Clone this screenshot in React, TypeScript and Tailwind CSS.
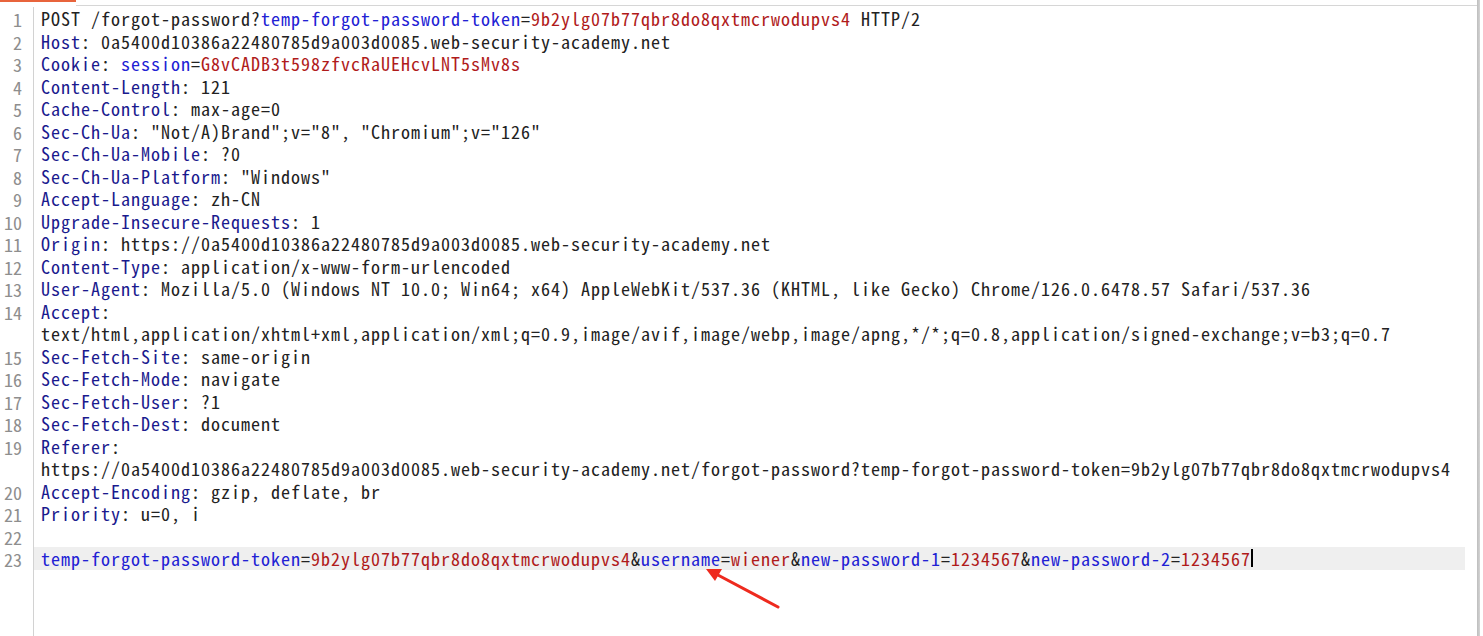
import React from "react";

type Kind = "t" | "k" | "p" | "v";
type Seg = [string, Kind];

const HOST = "0a5400d10386a22480785d9a003d0085.web-security-academy.net";
const TOKEN = "9b2ylg07b77qbr8do8qxtmcrwodupvs4";

const hdr = (name: string, value: string): Seg[][] => [[[name, "k"], [": " + value, "t"]]];

// each entry = one numbered line, holding one or more visual rows
const lines: Seg[][][] = [
  [[["POST /forgot-password?", "t"], ["temp-forgot-password-token", "p"], ["=", "t"], [TOKEN, "v"], [" HTTP/2", "t"]]],
  hdr("Host", HOST),
  [[["Cookie", "k"], [": ", "t"], ["session", "p"], ["=", "t"], ["G8vCADB3t598zfvcRaUEHcvLNT5sMv8s", "v"]]],
  hdr("Content-Length", "121"),
  hdr("Cache-Control", "max-age=0"),
  hdr("Sec-Ch-Ua", '"Not/A)Brand";v="8", "Chromium";v="126"'),
  hdr("Sec-Ch-Ua-Mobile", "?0"),
  hdr("Sec-Ch-Ua-Platform", '"Windows"'),
  hdr("Accept-Language", "zh-CN"),
  hdr("Upgrade-Insecure-Requests", "1"),
  hdr("Origin", "https://" + HOST),
  hdr("Content-Type", "application/x-www-form-urlencoded"),
  hdr(
    "User-Agent",
    "Mozilla/5.0 (Windows NT 10.0; Win64; x64) AppleWebKit/537.36 (KHTML, like Gecko) Chrome/126.0.6478.57 Safari/537.36"
  ),
  [
    [["Accept", "k"], [":", "t"]],
    [["text/html,application/xhtml+xml,application/xml;q=0.9,image/avif,image/webp,image/apng,*/*;q=0.8,application/signed-exchange;v=b3;q=0.7", "t"]],
  ],
  hdr("Sec-Fetch-Site", "same-origin"),
  hdr("Sec-Fetch-Mode", "navigate"),
  hdr("Sec-Fetch-User", "?1"),
  hdr("Sec-Fetch-Dest", "document"),
  [
    [["Referer", "k"], [":", "t"]],
    [["https://" + HOST + "/forgot-password?temp-forgot-password-token=" + TOKEN, "t"]],
  ],
  hdr("Accept-Encoding", "gzip, deflate, br"),
  hdr("Priority", "u=0, i"),
  [[]],
  [
    [
      ["temp-forgot-password-token", "p"],
      ["=", "t"],
      [TOKEN, "v"],
      ["&", "t"],
      ["username", "p"],
      ["=", "t"],
      ["wiener", "v"],
      ["&", "t"],
      ["new-password-1", "p"],
      ["=", "t"],
      ["1234567", "v"],
      ["&", "t"],
      ["new-password-2", "p"],
      ["=", "t"],
      ["1234567", "v"],
    ],
  ],
];

const kindClass: Record<Kind, string> = {
  t: "text-[#222222]",
  k: "text-[#1a1a8e]",
  p: "text-[#2121d4]",
  v: "text-[#b01b1b]",
};

const mono = { fontFamily: '"Noto Sans Mono CJK SC", "DejaVu Sans Mono", monospace' };

export default function App() {
  const last = lines.length;
  return (
    <div className="relative flex h-[636px] w-[1483px] overflow-hidden bg-white" style={mono}>
      <div className="flex w-[1477px] flex-col">
        {/* tab strip */}
        <div className="flex h-[6px] shrink-0">
          <div className="w-[76px] border-t-2 border-[#e8643c]" />
          <div className="flex-1 border-b border-[#d6d6d6]" />
        </div>

        <div className="flex flex-1 flex-col pt-px text-[18px] leading-[22.5px]">
          {lines.map((rows, i) =>
            rows.map((segs, j) => {
              const active = i + 1 === last;
              return (
                <div key={i + "-" + j} className="flex h-[22.5px]">
                  <div className="w-[34px] shrink-0 border-r border-[#d2d2d2] pr-[11px] pt-px text-right">
                    <span className="inline-block h-[22px] text-[18px] leading-[22px] text-[#8e8e8e]">
                      {j === 0 ? i + 1 : ""}
                    </span>
                  </div>
                  <div
                    className={
                      "mr-[12px] flex flex-1 items-center whitespace-pre pl-[7px] tracking-[1px] " +
                      (active ? "bg-[#efefef]" : "")
                    }
                  >
                    {segs.map(([txt, k], n) => (
                      <span key={n} className={"inline-block h-[22.5px] " + kindClass[k]}>
                        {txt}
                      </span>
                    ))}
                    {active && <span className="h-[18px] w-[2px] bg-black" />}
                  </div>
                </div>
              );
            })
          )}
          <div className="flex flex-1">
            <div className="w-[34px] border-r border-[#d2d2d2]" />
          </div>
        </div>
      </div>

      {/* scrollbar edge */}
      <div className="w-[3px] bg-gradient-to-r from-[#bdbdbd] to-[#d4d4d4]" />
      <div className="flex-1 bg-white" />

      {/* red annotation arrow */}
      <svg className="pointer-events-none absolute left-0 top-0" width="1483" height="636">
        <line x1="778" y1="607" x2="716" y2="574" stroke="#ee2a1e" strokeWidth="3" strokeLinecap="round" />
        <polygon points="706,569 722,569 715,581" fill="#ee2a1e" />
      </svg>
    </div>
  );
}
